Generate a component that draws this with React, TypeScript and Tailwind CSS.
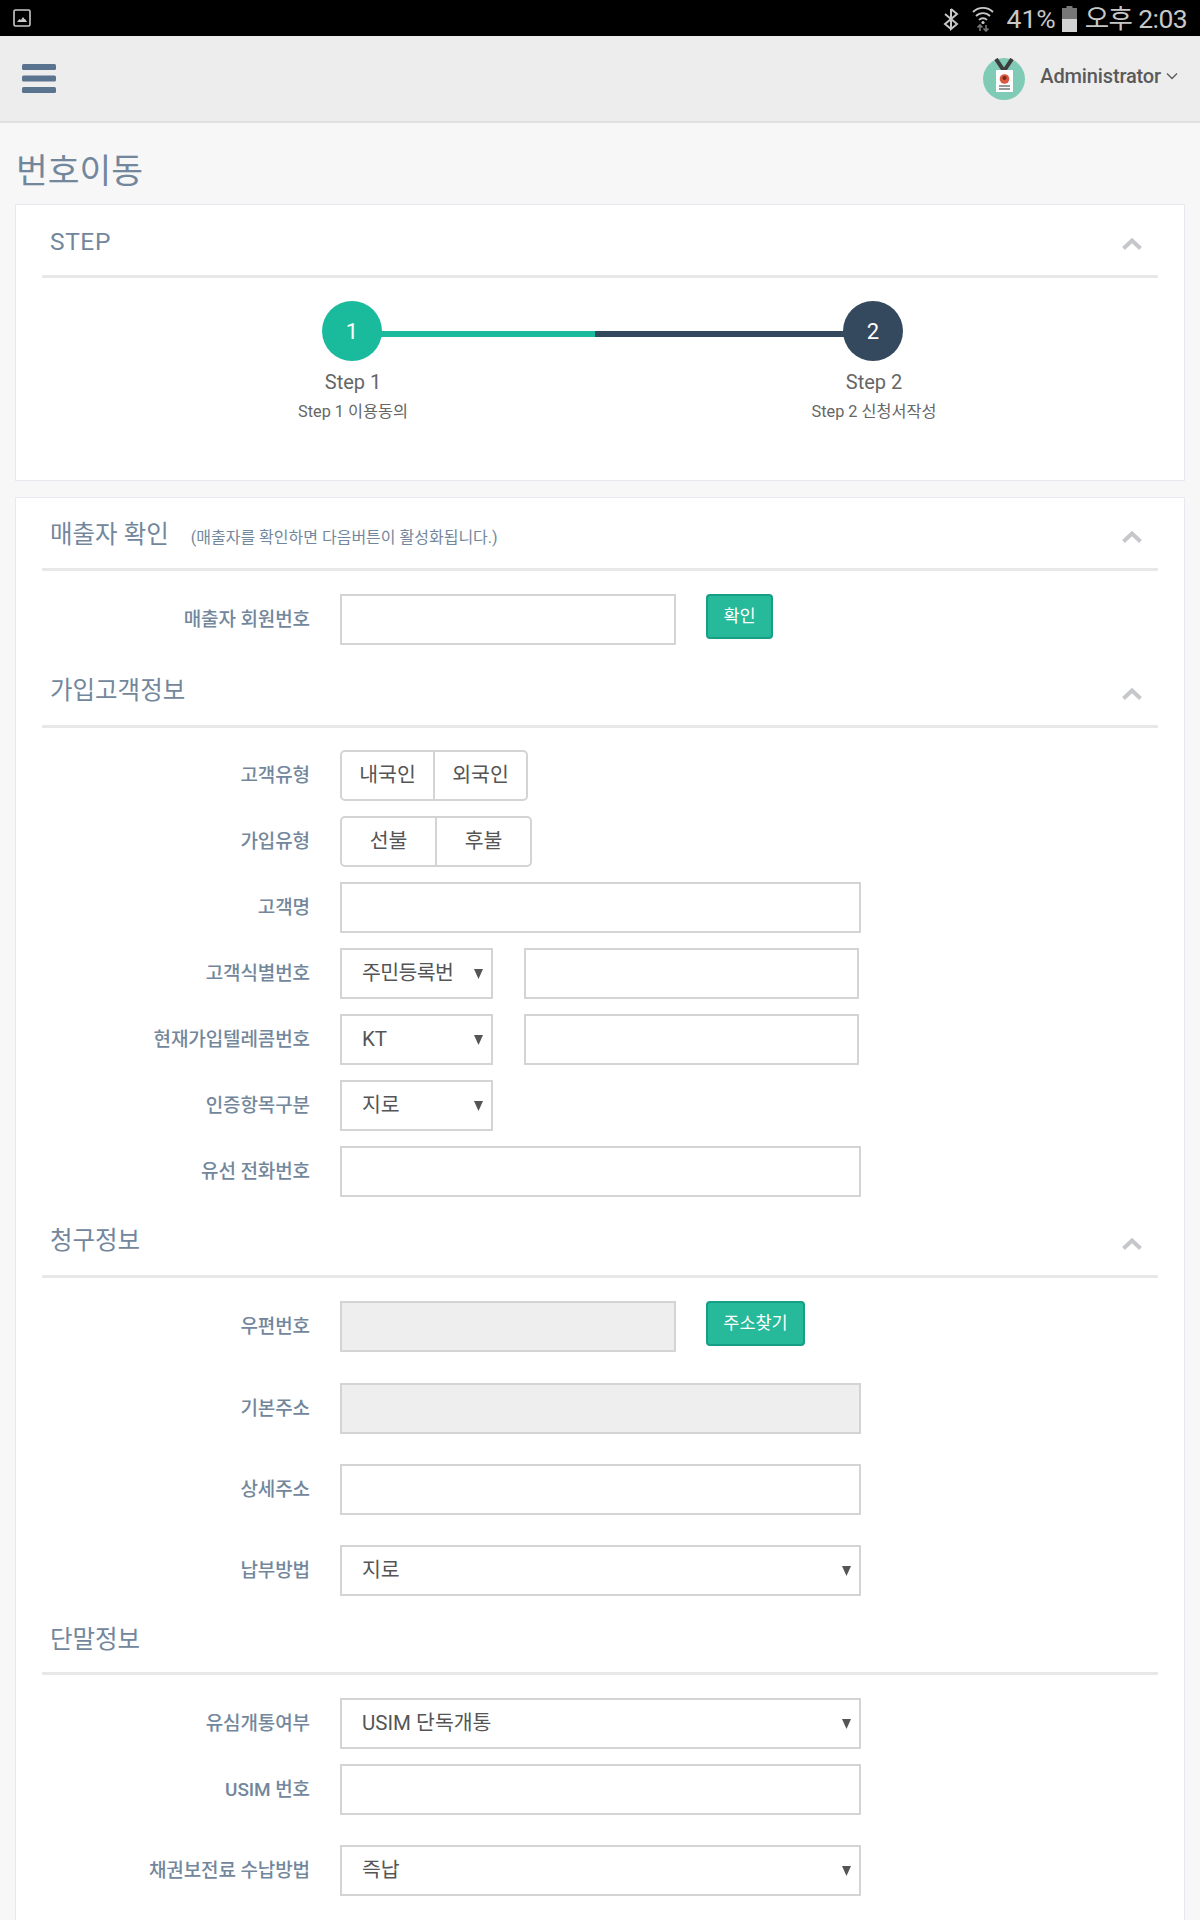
import React from "react";

const FONT = "font-['Roboto','Noto_Sans_CJK_KR',sans-serif]";

function Chevron() {
  return (
    <svg width="20" height="13" viewBox="0 0 20 13" className="mt-[8px]">
      <path d="M1.500 10.500L10 2.500l8.500 8" fill="none" stroke="#c5c7cb" strokeWidth="4" />
    </svg>
  );
}

function Section({ title, note, chevron = true, offset = "" }: { title: string; note?: string; chevron?: boolean; offset?: string }) {
  return (
    <div className="mx-[26px] flex h-[73px] items-center justify-between border-b-[3px] border-[#e8e8e8] pl-2 pr-[16px]">
      <div className={`flex items-baseline ${offset}`}>
        <span className="text-[24.500px] leading-none text-[#73879c]">{title}</span>
        {note && <span className="ml-[22px] text-[16px] tracking-normal text-[#73879c]">{note}</span>}
      </div>
      {chevron && <Chevron />}
    </div>
  );
}

function Row({ label, mt, children }: { label: string; mt: string; children: React.ReactNode }) {
  return (
    <div className={`ml-[26px] flex items-start ${mt}`}>
      <label className="h-[51px] w-[268px] text-right text-[19px] font-medium leading-[52px] tracking-[-0.1px] text-[#73879c]">{label}</label>
      <div className="ml-[30px] flex items-start">{children}</div>
    </div>
  );
}

function Field({ w, disabled, className = "" }: { w: string; disabled?: boolean; className?: string }) {
  return <input aria-label="field" disabled={disabled} className={`h-[51px] ${w} border-2 border-[#d4d4d4] ${disabled ? "bg-[#eeeeee]" : "bg-white"} ${className}`} />;
}

function Select({ w, value, tight }: { w: string; value: string; tight?: boolean }) {
  return (
    <div className={`relative flex h-[51px] ${w} items-center border-2 border-[#d4d4d4] bg-white pb-[1px] pl-[20px] pr-[28px]`}>
      <span className={`whitespace-nowrap text-[20.500px] text-[#555555] ${tight ? "tracking-[-0.6px]" : ""}`}>{value}</span>
      <svg className="absolute right-[8px] top-[19px]" width="9" height="10" viewBox="0 0 9 10"><path d="M0 0h9L4.500 10z" fill="#555" /></svg>
    </div>
  );
}

function Seg({ items, widths }: { items: string[]; widths: string[] }) {
  return (
    <div className="flex h-[51px] rounded-[5px] border-2 border-[#d4d4d4] bg-white">
      {items.map((t, i) => (
        <div key={t} className={`flex items-center justify-center pb-[1px] text-[20.500px] text-[#555555] ${widths[i]} ${i > 0 ? "border-l-2 border-[#d4d4d4]" : ""}`}>{t}</div>
      ))}
    </div>
  );
}

function Btn({ w, children }: { w: string; children: React.ReactNode }) {
  return <button className={`ml-[30px] h-[45px] ${w} rounded-[4px] border-2 border-[#169f85] bg-[#26b99a] text-[17.500px] text-white`}>{children}</button>;
}

function StepLabel({ title, sub }: { title: string; sub: string }) {
  return (
    <div className="w-[200px]">
      <div className="text-[20px] leading-[28px]">{title}</div>
      <div className="mt-[4px] text-[16.300px] leading-[24px]">{sub}</div>
    </div>
  );
}

export default function App() {
  return (
    <div className={`h-[1920px] overflow-hidden bg-[#f7f7f7] ${FONT}`}>
      <div className="flex h-9 items-center justify-between bg-black pl-[13px] pr-[13px]">
        <svg width="18" height="18" viewBox="0 0 18 18">
          <rect x="1" y="1" width="16" height="16" rx="1.500" fill="none" stroke="#c9c9c9" strokeWidth="1.600" />
          <path d="M4 13l2.500-3 1.500 1 2-3 1.500 2 1 .5L14 13z" fill="#c9c9c9" />
        </svg>
        <div className="flex items-center pt-[2px] text-[26.500px] leading-none text-[#c8c8c8]">
          <svg width="16" height="24" viewBox="0 0 16 24" className="mr-[13px]">
            <path d="M8 2v20l6-5-12-10M8 2l6 5L2 17l6 5" fill="none" stroke="#c8c8c8" strokeWidth="2" />
          </svg>
          <svg width="22" height="26" viewBox="0 0 22 26" className="mr-[13px]">
            <path d="M1 6a14 14 0 0 1 20 0M4 10a10 10 0 0 1 14 0M7 14a5.500 5.500 0 0 1 8 0" fill="none" stroke="#c8c8c8" strokeWidth="1.800" />
            <circle cx="11" cy="16.500" r="1.600" fill="#c8c8c8" />
            <path d="M8 19v6M5.500 21.500L8 19l2.500 2.500M14 25v-6M11.500 22.500L14 25l2.500-2.500" fill="none" stroke="#777" strokeWidth="1.600" />
          </svg>
          <span>41%</span>
          <svg width="15" height="26" viewBox="0 0 15 26" className="ml-[6px] mr-[8px]">
            <rect x="4.500" y="0" width="6" height="2" fill="#777" />
            <rect x="0" y="2" width="15" height="11" fill="#777" />
            <rect x="0" y="13" width="15" height="13" fill="#d2d2d2" />
          </svg>
          <span className="tracking-[-0.6px]">오후 2:03</span>
        </div>
      </div>

      <div className="flex h-[87px] items-center justify-between border-b-2 border-[#e0e0e0] bg-[#ededed] pl-[22px] pr-[22px]">
        <svg width="34" height="30" viewBox="0 0 34 30" className="mt-[1px]">
          <rect width="34" height="6" rx="1.500" fill="#5a738e" />
          <rect y="11.500" width="34" height="6" rx="1.500" fill="#5a738e" />
          <rect y="23" width="34" height="6" rx="1.500" fill="#5a738e" />
        </svg>
        <div className="flex items-center">
          <svg width="42" height="42" viewBox="0 0 42 42">
            <circle cx="21" cy="21" r="21" fill="#80cbb6" />
            <path d="M13 1l8 12 8-12" fill="none" stroke="#3d3d3d" strokeWidth="4" />
            <rect x="13" y="12" width="17" height="22" fill="#fff" />
            <circle cx="21.500" cy="21" r="4.800" fill="#d9573f" />
            <circle cx="21.500" cy="20" r="2" fill="#702c20" />
            <path d="M16 28h11M16 31h11" stroke="#333" strokeWidth="1" />
          </svg>
          <span className="mb-[5px] ml-[15px] text-[20px] font-medium tracking-[-0.15px] text-[#5a5a5a]">Administrator</span>
          <svg width="12" height="8" viewBox="0 0 12 8" className="mb-[5px] ml-[5px]"><path d="M1 1.500l5 5 5-5" fill="none" stroke="#5a5a5a" strokeWidth="1.300" /></svg>
        </div>
      </div>

      <h1 className="ml-4 mt-[27px] h-[54px] text-[34.500px] font-normal leading-[42px] text-[#73879c]">번호이동</h1>

      <div className="mx-[15px] h-[277px] border border-[#e6e9ed] bg-white">
        <Section title="STEP" offset="mt-[4px] tracking-[0.6px]" />
        <div className="ml-[306px] mt-[23px] flex w-[581px] items-center">
          <div className="z-10 flex h-[60px] w-[60px] shrink-0 items-center justify-center rounded-full bg-[#1abb9c] text-[22px] text-white">1</div>
          <div className="mx-[-1px] mt-[6px] h-[6px] w-[216px] bg-[#1abb9c]" />
          <div className="mx-[-1px] mt-[6px] h-[6px] w-[249px] bg-[#34495e]" />
          <div className="z-10 flex h-[60px] w-[60px] shrink-0 items-center justify-center rounded-full bg-[#34495e] text-[22px] text-white">2</div>
        </div>
        <div className="ml-[237px] mt-[7px] flex w-[721px] justify-between text-center text-[#666666]">
          <StepLabel title="Step 1" sub="Step 1 이용동의" />
          <StepLabel title="Step 2" sub="Step 2 신청서작성" />
        </div>
      </div>

      <div className="mx-[15px] mt-[16px] h-[1500px] border border-[#e6e9ed] bg-white">
        <Section title="매출자 확인" note="(매출자를 확인하면 다음버튼이 활성화됩니다.)" offset="mt-[7px]" />
        <Row label="매출자 회원번호" mt="mt-[23px]">
          <Field w="w-[336px]" />
          <Btn w="w-[67px]">확인</Btn>
        </Row>
        <div className="mt-[10px]"><Section title="가입고객정보" offset="mt-[2px]" /></div>
        <Row label="고객유형" mt="mt-[22px]">
          <Seg items={["내국인", "외국인"]} widths={["w-[91px]", "w-[93px]"]} />
        </Row>
        <Row label="가입유형" mt="mt-[15px]">
          <Seg items={["선불", "후불"]} widths={["w-[93px]", "w-[95px]"]} />
        </Row>
        <Row label="고객명" mt="mt-[15px]"><Field w="w-[521px]" /></Row>
        <Row label="고객식별번호" mt="mt-[15px]">
          <Select w="w-[153px]" value="주민등록번" tight />
          <Field w="w-[335px]" className="ml-[31px]" />
        </Row>
        <Row label="현재가입텔레콤번호" mt="mt-[15px]">
          <Select w="w-[153px]" value="KT" />
          <Field w="w-[335px]" className="ml-[31px]" />
        </Row>
        <Row label="인증항목구분" mt="mt-[15px]"><Select w="w-[153px]" value="지로" /></Row>
        <Row label="유선 전화번호" mt="mt-[15px]"><Field w="w-[521px]" /></Row>
        <div className="mt-[8px]"><Section title="청구정보" offset="mt-[2px]" /></div>
        <Row label="우편번호" mt="mt-[23px]">
          <Field w="w-[336px]" disabled />
          <Btn w="w-[99px]">주소찾기</Btn>
        </Row>
        <Row label="기본주소" mt="mt-[31px]"><Field w="w-[521px]" disabled /></Row>
        <Row label="상세주소" mt="mt-[30px]"><Field w="w-[521px]" /></Row>
        <Row label="납부방법" mt="mt-[30px]"><Select w="w-[521px]" value="지로" /></Row>
        <div className="mt-[6px]"><Section title="단말정보" chevron={false} offset="mt-[6px]" /></div>
        <Row label="유심개통여부" mt="mt-[23px]"><Select w="w-[521px]" value="USIM 단독개통" /></Row>
        <Row label="USIM 번호" mt="mt-[15px]"><Field w="w-[521px]" /></Row>
        <Row label="채권보전료 수납방법" mt="mt-[30px]"><Select w="w-[521px]" value="즉납" /></Row>
      </div>
    </div>
  );
}
